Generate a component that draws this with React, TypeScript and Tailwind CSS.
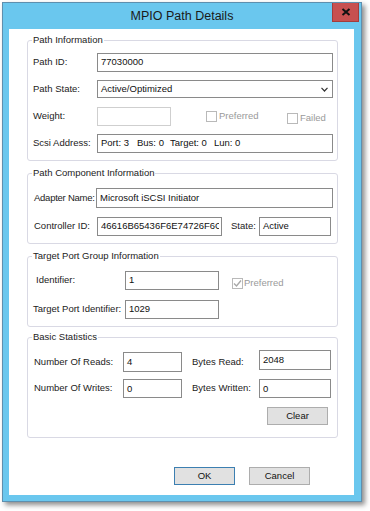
import React from "react";

const Box = ({ w, h, children, disabled, className = "" }: { w: string; h: string; children?: React.ReactNode; disabled?: boolean; className?: string }) => (
  <div
    className={`${w} ${h} ${className} border ${disabled ? "border-[#cfcfcf]" : "border-[#8a8a8a]"} bg-white flex items-center pl-[3px] overflow-hidden whitespace-nowrap text-[#111] shrink-0`}
  >
    {children}
  </div>
);

const Check = ({ checked }: { checked?: boolean }) => (
  <div className="w-[11px] h-[11px] border border-[#b9b9b9] bg-white flex items-center justify-center shrink-0">
    {checked && (
      <svg width="9" height="9" viewBox="0 0 9 9">
        <path d="M1 4.5 L3.5 7 L8 1.5" fill="none" stroke="#a8a8a8" strokeWidth="1.4" />
      </svg>
    )}
  </div>
);

const Group = ({ title, h, children, pt }: { title: string; h: string; children: React.ReactNode; pt: string }) => (
  <div className={`relative w-[311px] ${h} border border-[#d9d9e4] rounded-[3px] pl-[5px] ${pt} flex flex-col`}>
    <div className="absolute left-[4px] top-[-7px] bg-white px-[1px] leading-[12px] text-[#222]">{title}</div>
    {children}
  </div>
);

export default function App() {
  return (
    <div className="w-[370px] h-[511px] bg-white pt-[2px] pl-[2px] font-['Liberation_Sans',Arial,sans-serif] text-[9.5px] text-[#222] whitespace-nowrap">
      <div className="relative w-[360px] h-[500px] border border-[#5e8fae] bg-[#6ac7ee] shadow-[3px_3px_5px_rgba(0,0,0,0.45)] flex flex-col">
        <div className="h-[26px] flex items-center justify-center text-[12.5px] text-[#1a1a1a] pt-[1px]">MPIO Path Details</div>
        <div className="absolute right-[2px] top-0 w-[27px] h-[19px] bg-[#c75050] border border-[#a33c3c] border-t-0 flex items-center justify-center">
          <svg width="10" height="8" viewBox="0 0 10 8">
            <path d="M1.5 1 L8.5 7 M8.5 1 L1.5 7" stroke="#111" strokeWidth="2" />
          </svg>
        </div>
        <div className="ml-[6px] w-[345px] h-[466px] bg-white pl-[18px] pt-[11px] flex flex-col">
          <Group title="Path Information" h="h-[121px]" pt="pt-[12px]">
            <div className="flex items-center h-[19px]">
              <div className="w-[64px]">Path ID:</div>
              <Box w="w-[236px]" h="h-[19px]">77030000</Box>
            </div>
            <div className="flex items-center h-[18px] mt-[8px]">
              <div className="w-[64px]">Path State:</div>
              <div className="w-[236px] h-[18px] border border-[#8a8a8a] bg-white flex items-center pl-[3px] pr-[4px] text-[#111]">
                <span className="flex-1">Active/Optimized</span>
                <svg width="7" height="5" viewBox="0 0 7 5">
                  <path d="M0.5 0.8 L3.5 4 L6.5 0.8" fill="none" stroke="#333" strokeWidth="1.2" />
                </svg>
              </div>
            </div>
            <div className="flex items-center h-[19px] mt-[9px]">
              <div className="w-[64px]">Weight:</div>
              <Box w="w-[74px]" h="h-[19px]" disabled />
              <div className="ml-[35px] w-[81px] flex items-center text-[#9a9a9a]">
                <Check />
                <span className="ml-[2px]">Preferred</span>
              </div>
              <div className="flex items-center text-[#9a9a9a] mt-[3px]">
                <Check />
                <span className="ml-[2px] mt-[1px]">Failed</span>
              </div>
            </div>
            <div className="flex items-center h-[19px] mt-[8px]">
              <div className="w-[64px]">Scsi Address:</div>
              <Box w="w-[236px]" h="h-[19px]">
                <span>Port: 3</span>
                <span className="ml-[8px]">Bus: 0</span>
                <span className="ml-[6px]">Target: 0</span>
                <span className="ml-[7px]">Lun: 0</span>
              </Box>
            </div>
          </Group>

          <div className="mt-[12px]">
            <Group title="Path Component Information" h="h-[71px]" pt="pt-[14px]">
              <div className="flex items-center h-[20px]">
                <div className="w-[63px] pl-[1px] tracking-[-0.25px]">Adapter Name:</div>
                <Box w="w-[237px]" h="h-[20px]">Microsoft iSCSI Initiator</Box>
              </div>
              <div className="flex items-center h-[19px] mt-[9px]">
                <div className="w-[64px] pl-[1px]">Controller ID:</div>
                <Box w="w-[125px]" h="h-[19px]">
                  <span className="block w-[118px] overflow-hidden">46616B65436F6E74726F6C6C</span>
                </Box>
                <div className="ml-[9px] w-[28px]">State:</div>
                <Box w="w-[72px]" h="h-[19px]">Active</Box>
              </div>
            </Group>
          </div>

          <div className="mt-[12px]">
            <Group title="Target Port Group Information" h="h-[71px]" pt="pt-[14px]">
              <div className="flex items-center h-[19px]">
                <div className="w-[92px] pl-[3px]">Identifier:</div>
                <Box w="w-[94px]" h="h-[19px]">1</Box>
                <div className="ml-[13px] flex items-center text-[#9a9a9a] mt-[6px]">
                  <Check checked />
                  <span className="ml-[1px]">Preferred</span>
                </div>
              </div>
              <div className="flex items-center h-[19px] mt-[10px]">
                <div className="w-[92px]">Target Port Identifier:</div>
                <Box w="w-[94px]" h="h-[19px]">1029</Box>
              </div>
            </Group>
          </div>

          <div className="mt-[10px]">
            <Group title="Basic Statistics" h="h-[101px]" pt="pt-[12px]">
              <div className="flex items-center h-[22px]">
                <div className="w-[90px] pl-[1px] mt-[2px]">Number Of Reads:</div>
                <Box w="w-[59px]" h="h-[20px]" className="mt-[2px] !items-start pt-[2px]">4</Box>
                <div className="ml-[10px] w-[67px] mt-[2px]">Bytes Read:</div>
                <Box w="w-[72px]" h="h-[20px]" className="mb-[2px] !items-start pt-[2px]">2048</Box>
              </div>
              <div className="flex items-center h-[19px] mt-[7px]">
                <div className="w-[90px] pl-[1px]">Number Of Writes:</div>
                <Box w="w-[59px]" h="h-[19px]" className="!items-start pt-[2px]">0</Box>
                <div className="ml-[10px] w-[67px]">Bytes Written:</div>
                <Box w="w-[72px]" h="h-[19px]" className="!items-start pt-[2px]">0</Box>
              </div>
              <div className="self-end mr-[9px] mt-[9px] w-[61px] h-[18px] bg-[#e1e1e1] border border-[#adadad] flex items-center justify-center text-[#111]">
                Clear
              </div>
            </Group>
          </div>

          <div className="mt-[29px] flex justify-end pr-[44px] gap-[14px]">
            <div className="w-[61px] h-[18px] bg-[#e1e1e1] border border-[#3c7fb1] flex items-center justify-center text-[#111]">OK</div>
            <div className="w-[61px] h-[18px] bg-[#e1e1e1] border border-[#adadad] flex items-center justify-center text-[#111]">Cancel</div>
          </div>
        </div>
      </div>
    </div>
  );
}
